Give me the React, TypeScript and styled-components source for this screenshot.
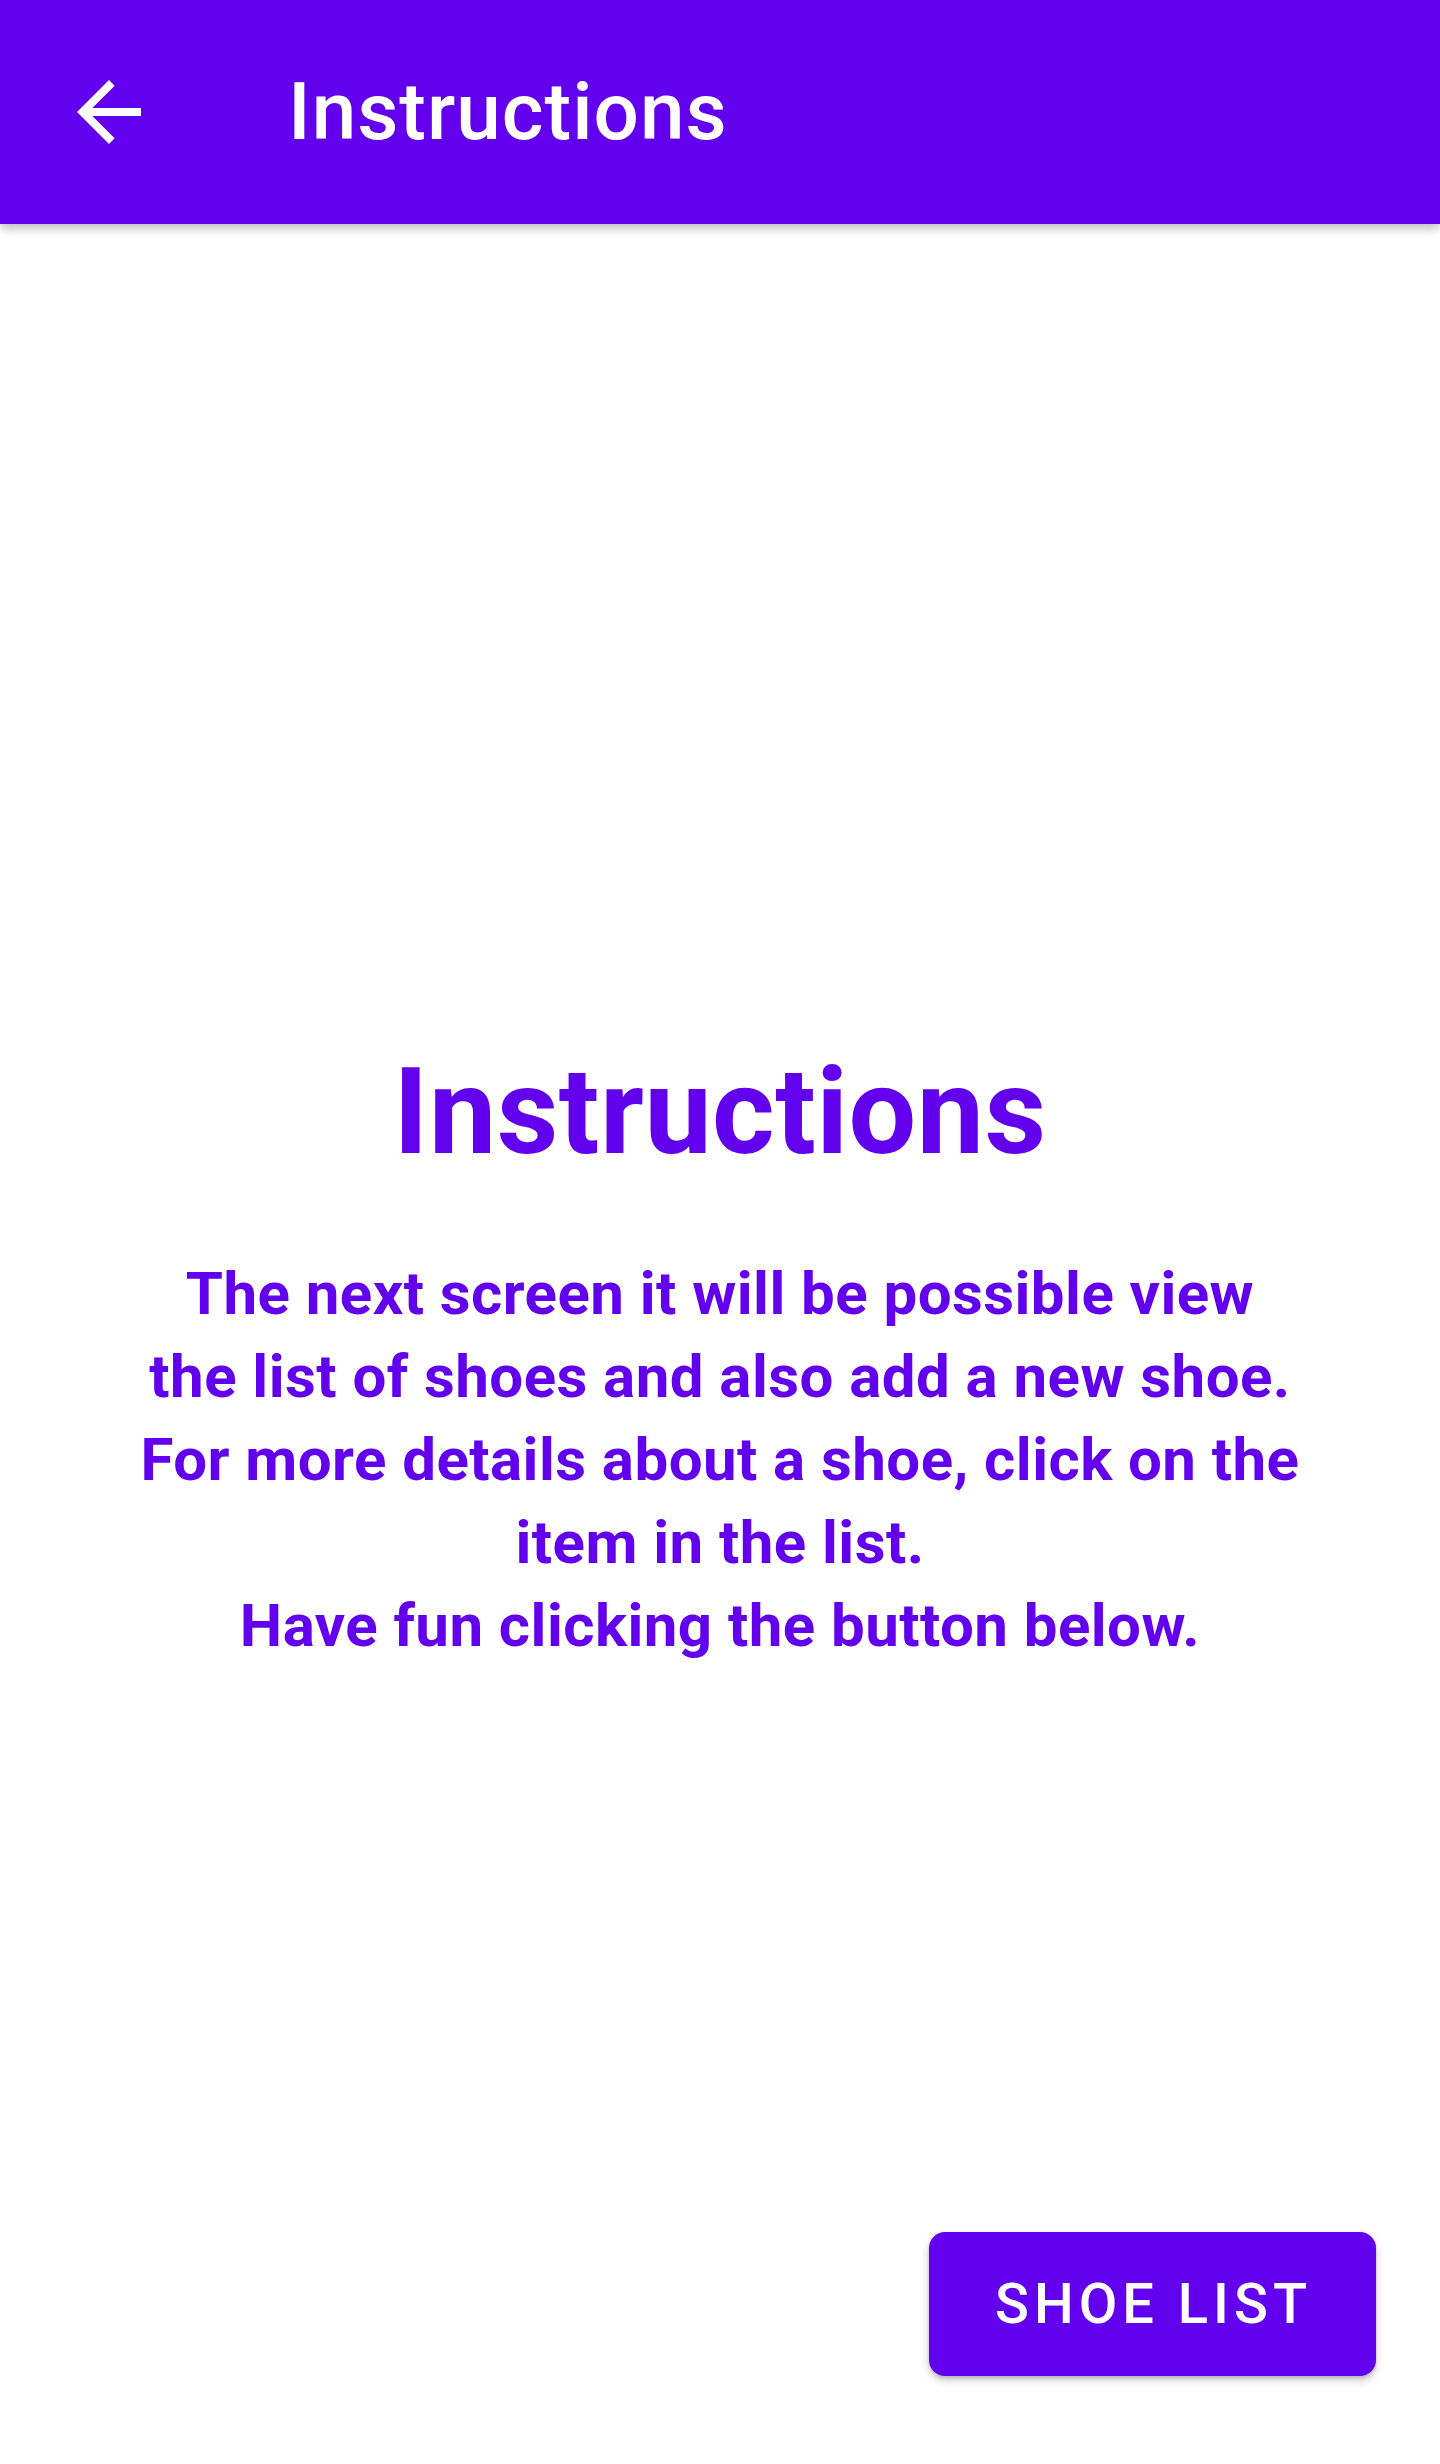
import React from 'react'
import styled, { createGlobalStyle } from 'styled-components'

const purple = '#6200EE'

const GlobalStyle = createGlobalStyle`
  html, body {
    margin: 0;
    padding: 0;
    background: #ffffff;
  }
  body {
    font-family: Roboto, 'Noto Sans', sans-serif;
  }
`

const Screen = styled.div`
  display: flex;
  flex-direction: column;
  width: 1440px;
  height: 2464px;
  overflow: hidden;
  background: #ffffff;
`

const Toolbar = styled.header`
  position: relative;
  z-index: 1;
  display: flex;
  align-items: center;
  flex-shrink: 0;
  height: 224px;
  background: ${purple};
  box-shadow: 0 4px 10px rgba(0, 0, 0, 0.28);
`

const NavButton = styled.button`
  display: flex;
  align-items: center;
  height: 224px;
  margin: 0;
  padding: 0 0 0 61px;
  border: none;
  background: transparent;
  cursor: pointer;
`

const ToolbarTitle = styled.h1`
  margin: 0 0 0 131px;
  font-family: Roboto, sans-serif;
  font-weight: 500;
  font-size: 80px;
  line-height: 1;
  color: #ffffff;
  letter-spacing: 1px;
`

const Content = styled.main`
  display: flex;
  flex-direction: column;
  align-items: center;
  flex: 1;
  padding-top: 818px;
`

const Heading = styled.h2`
  margin: 0;
  font-family: Roboto, sans-serif;
  font-weight: 700;
  font-size: 120px;
  line-height: 140px;
  letter-spacing: 0.5px;
  color: ${purple};
  text-align: center;
`

const Body = styled.p`
  margin: 70px 0 0;
  font-family: Roboto, sans-serif;
  font-weight: 700;
  font-size: 60px;
  line-height: 83px;
  letter-spacing: 0.45px;
  color: ${purple};
  text-align: center;
  white-space: nowrap;
`

const Footer = styled.footer`
  display: flex;
  justify-content: flex-end;
  padding: 0 64px 88px;
`

const PrimaryButton = styled.button`
  display: flex;
  align-items: center;
  justify-content: center;
  height: 144px;
  padding: 0 64px 0 66px;
  border: none;
  border-radius: 16px;
  background: ${purple};
  color: #ffffff;
  font-family: Roboto, sans-serif;
  font-weight: 500;
  font-size: 56px;
  letter-spacing: 5px;
  text-transform: uppercase;
  box-shadow: 0 4px 8px rgba(0, 0, 0, 0.22), 0 2px 3px rgba(0, 0, 0, 0.12);
  cursor: pointer;
`

const BackArrow = () => (
  <svg width='96' height='96' viewBox='0 0 24 24' fill='#ffffff'>
    <path d='M20 11H7.83l5.59-5.59L12 4l-8 8 8 8 1.41-1.41L7.83 13H20v-2z' />
  </svg>
)

const lines = [
  'The next screen it will be possible view',
  'the list of shoes and also add a new shoe.',
  'For more details about a shoe, click on the',
  'item in the list.',
  'Have fun clicking the button below.',
]

const App: React.FC = () => (
  <Screen>
    <GlobalStyle />
    <Toolbar>
      <NavButton aria-label='Back'>
        <BackArrow />
      </NavButton>
      <ToolbarTitle>Instructions</ToolbarTitle>
    </Toolbar>
    <Content>
      <Heading>Instructions</Heading>
      <Body>
        {lines.map((line, i) => (
          <React.Fragment key={i}>
            {line}
            {i < lines.length - 1 && <br />}
          </React.Fragment>
        ))}
      </Body>
    </Content>
    <Footer>
      <PrimaryButton>Shoe List</PrimaryButton>
    </Footer>
  </Screen>
)

export default App
